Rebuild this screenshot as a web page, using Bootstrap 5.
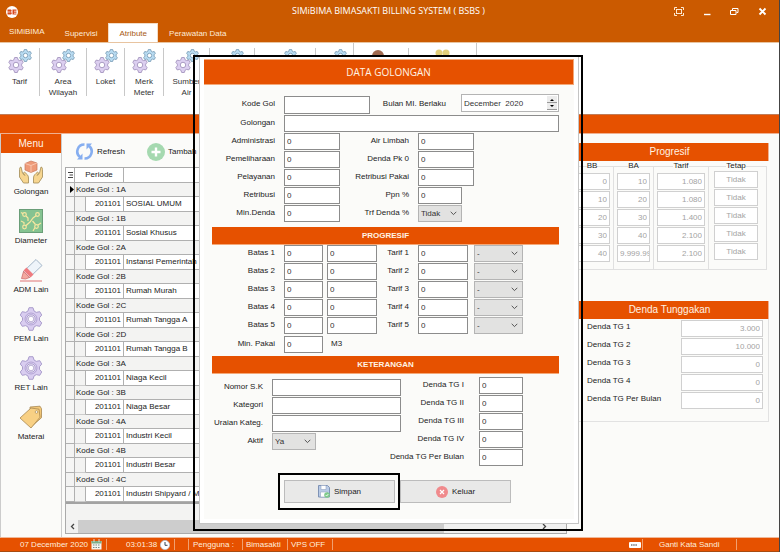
<!DOCTYPE html>
<html lang="id">
<head>
<meta charset="utf-8">
<meta name="viewport" content="width=device-width, initial-scale=1">
<title>SIMiBIMA BIMASAKTI BILLING SYSTEM ( BSBS )</title>
<link href="https://cdn.jsdelivr.net/npm/bootstrap@5.3.0/dist/css/bootstrap.min.css" rel="stylesheet">
<style>
:root{--brand:#e65100;--head:#cb5a00;--pane:#fbfbf9;--rule:#bdbdbd}
body{font:8px/10px "Liberation Sans",Arial,sans-serif;color:#222;background:var(--pane);overflow:hidden}
button{border:0;background:none;padding:0;color:inherit;line-height:10px}
svg{display:block;flex:none}
.app{min-height:100vh;border-right:1px solid #444}
.topbar{background:var(--head);color:#fff;border-bottom:1px solid #e8c4a0}
.titlebar{height:23px;font:9px/21px "Open Sans","Noto Sans",sans-serif}
.logo-slot{width:103px;padding-left:5px}
.win-tools{width:105px;padding-right:12px}
.tabs{height:19px}
.tabs a{color:#fdebd8;text-decoration:none;padding:6px 11px 3px;font-size:8px}
.tabs a.first-tab{padding:4px 9px 3px 9px}
.tabs a.open-tab{background:#fff;color:#a85a14;padding:5px 10px 4px;border:1px solid #f4dcc4;border-bottom:0}
.ribbon{background:#fff;height:71px}
.tool{border-right:1px solid #c8c8c8;height:48px;margin-top:5px;color:#333;line-height:11px}
.tool.tall{height:66px;margin-top:0;padding:5px 0 12px}
.tool svg{margin:1px auto 3px}
.w-a{width:40px}.w-b{width:47px}.w-c{width:38px}.w-d{width:39px}.w-e{width:46px}.w-f{width:45px}.w-g{width:61px}.w-h{width:38px}.w-i{width:55px}.w-j{width:68px}
.banner{background:var(--brand);height:20px;border-top:1px solid #c07c58;border-bottom:1px solid #f0b090}
.side{width:62px;border-left:1px solid #ccc;border-right:1px solid #ccc}
.side h2{background:var(--brand);color:#fff3e4;font-size:10px;line-height:19px;margin:0 0 7px}
.side button{width:100%;margin-bottom:12px}
.side svg{margin:0 auto 3px}
.center-pane{width:508px;padding:0 3px 3px}
.toolbar{height:33px;padding:2px 0 0 10px}
.toolbar button{gap:3px;margin-right:22px}
.grid-box{border:1px solid #aaa;background:#f3f3f2}
.grid-table{width:100%;margin:0;table-layout:fixed;border-collapse:separate;border-spacing:0}
.grid-table td,.grid-table th{padding:0 0 0 2px;border-bottom:1px solid #b0b0b0;border-right:1px solid #b0b0b0;font-weight:400;white-space:nowrap;height:15px;line-height:12px;overflow:hidden}
.grid-table tr.grp td{height:14px;background:#f3f3f2;padding-left:1px}
.grid-table td:first-child{background:#f6f6f5;padding:0}
.grid-table tr:not(.grp) td:nth-child(2){background:#f3f3f2;border-bottom-color:#ccc}
.grid-table tr:not(.grp) td:nth-child(n+3),.grid-table th{background:#fff}
.grid-table td.num{text-align:right;padding-right:2px}
.grid-foot{height:18px;border-top:2px solid #a2a2a2}
.scroll-track{height:13px;background:#f0f0f0}
.scroll-thumb{background:#cdcdcd;width:366px}
.scroll-track button{width:12px}
.right-pane{padding:9px 10px 0 1px;min-width:0}
.cap{background:var(--brand);color:#fff3e4;font-size:10px;line-height:18px;margin:0;text-align:center;border:0 solid #f0b090;border-right-width:1px}
.prog{margin:5px 2px 31px 0;height:104px}
.prog-col{border:1px solid #e0e0e0;border-left:0;padding:0 3px}
.prog-col span{display:block;width:fit-content;margin:-6px auto 3px;line-height:9px;background:var(--pane)}
.prog-col.tetap{padding:0 8px 0 5px}
.prog-col.tetap span{margin-bottom:1px}
input,select{font:8px/10px "Liberation Sans",Arial,sans-serif;height:17px;border:1px solid #8c8c8c;background:#fff;color:#333;padding:0 3px 0 2px;width:100%;min-width:0;border-radius:0;display:block}
input:focus,select:focus{outline:0}
.ro{border:1px solid #d0d0d0;color:#a3a3a3;text-align:right;padding-right:2px;margin-bottom:1px}
.ro.mid{text-align:center;padding:0}
.p1{width:43px}.p2{width:40px}.p3{width:55px}.p4{width:56px}
.tungg{border-bottom:1px solid #e2e2e2;border-right:1px solid #e2e2e2;padding:1px 5px 11px 16px}
.tungg .ro{width:82px}
.tungg label{line-height:14px}
.status{background:var(--brand);color:#ffeedd;height:15px;border-top:1px solid #f0b898;border-bottom:1px solid #a84a10}
.status span,.status a{border-right:1px solid #f0a070;height:11px;line-height:12px;color:inherit;text-decoration:none;white-space:nowrap}
.s-date{width:107px;padding-left:20px}.s-time{width:68px;padding-left:19px}.s-gap{width:14px}.s-user{width:54px;padding-left:4px}.s-name{width:45px;padding-left:3px}.s-vps{width:45px;padding-left:3px}
.s-key{width:14px}.s-pass{width:94px;padding-left:16px;margin-right:42px}
/* dialog and its highlight frames */
.frame{position:absolute;left:193px;top:55px;width:390px;border:2px solid #000;padding:0 2px 5px 4px}
.dlg{background:#fff;border:1px solid #c4c4c4;border-top:0;padding:2px 4px 4px}
.dlg-body{background:var(--pane);padding:11px 15px 9px 0}
.dlg h1{background:var(--brand);color:#fff3e4;font:10px/24px "Open Sans","Noto Sans",sans-serif;margin:0;text-align:center;border:1px solid #f4a878;border-width:1px 1px 1px 0}
.dlg h2{background:var(--brand);color:#fff3e4;font-size:8px;font-weight:700;line-height:17px;margin:5px 0 0 8px;text-align:center;border-bottom:1px solid #f4a878}
.dlg .g-min+h2{margin-top:3px}
.fgrid{display:grid;row-gap:1px;align-items:start;align-content:start}
.fgrid label{text-align:right;padding-right:9px;line-height:15px;white-space:nowrap}
.fgrid label.far{padding-right:15px}
.g-code{grid-template-columns:80px 86px 1fr 98px;margin-bottom:1px}
.g-code input{height:18px}
.g-name{grid-template-columns:80px 1fr;margin-bottom:1px}
.g-fee{grid-template-columns:80px 56px 1fr 56px;padding-right:85px}
.g-tier{grid-template-columns:80px 39px 4px 50px 1fr 50px 6px 49px;padding-right:36px}
.g-min{grid-template-columns:80px 39px 1fr;margin-top:2px}
.ket{padding-top:3px}
.g-sk{grid-template-columns:68px 129px;padding-top:2px}
.g-tg{grid-template-columns:minmax(0,1fr) 44px;justify-items:end;padding-right:36px}
.narrow{width:44px}
select{appearance:none;background:#e2e2e1 url("data:image/svg+xml,%3Csvg xmlns='http://www.w3.org/2000/svg' width='7' height='5'%3E%3Cpath d='M.7.8 3.5 3.6 6.3.8' fill='none' stroke='%23555'/%3E%3C/svg%3E") no-repeat right 4px center;border-color:#b4b4b4}
.spin{border:1px solid #b4b4b4;background:#fff;height:18px;margin-top:-2px}
.spin input{border:0;height:16px}
.spin-btns{width:14px;padding:1px}
.spin-btns button{background:#ececec;border-bottom:1px solid #999}
.spin-btns svg{margin:auto}
.actions{padding:7px 0 0 74px}
.save-ring{border:2px solid #000;padding:5px 3px 5px 4px}
.act{background:#e9e9e8;border:1px solid #bcbcbc;width:111px;height:23px;gap:4px}
</style>
</head>
<body>
<svg width="0" height="0" class="position-absolute" aria-hidden="true">
  <symbol id="gear" viewBox="-8.5 -8.5 17 17"><path d="M-2.2-5.6L-1.4-8H1.4L2.2-5.6 3.75-4.7 6.2-5.2 7.6-2.8 6-.9V.9L7.6 2.8 6.2 5.2 3.75 4.7 2.2 5.6 1.4 8H-1.4L-2.2 5.6-3.75 4.7-6.2 5.2-7.6 2.8-6 .9V-.9L-7.6-2.8-6.2-5.2-3.75-4.7Z" stroke-linejoin="round"/><circle r="2.9" fill="#fff"/></symbol>
  <symbol id="gears" viewBox="0 0 24 24"><use href="#gear" x="0" y="8" width="16" height="16" fill="#dccff0" stroke="#a698c0"/><use href="#gear" x="11" y="0" width="13" height="13" fill="#b9dcf2" stroke="#7c9fb8" stroke-width="1.2"/></symbol>
  <symbol id="biggear" viewBox="0 0 24 24"><use href="#gear" width="24" height="24" fill="#d9cdf0" stroke="#a99bcb" stroke-width=".7"/><circle cx="12" cy="12" r="6" fill="none" stroke="#a99bcb" stroke-width=".8"/><circle cx="12" cy="12" r="2.8" fill="#fff" stroke="#a99bcb" stroke-width=".8"/></symbol>
</svg>
<div class="app d-flex flex-column position-relative">
  <header class="topbar">
    <div class="titlebar d-flex">
      <div class="logo-slot d-flex align-items-center"><svg width="14" height="14" viewBox="0 0 14 14"><circle cx="7" cy="7" r="6" fill="#fff"/><path d="M2.500 4.500h3.500l.7 1-.6 1.400.8 1.300-.8 1.300H2.500zM7.500 4.500h4v1.200h-2.500v.8h2.500v1.200h-2.500v.8h2.500V9.500h-4z" fill="#d8481c"/><path d="M1 7h4.500" stroke="#fff" stroke-width=".7"/></svg></div>
      <div class="flex-fill text-center text-nowrap">SIMiBIMA BIMASAKTI BILLING SYSTEM ( BSBS )</div>
      <div class="win-tools d-flex align-items-center justify-content-between">
        <button aria-label="Layar penuh"><svg width="10" height="9" viewBox="0 0 10 9" fill="none" stroke="#fde8d0"><path d="M.5 3V.5H3M7 .5h2.500V3M9.500 6v2.500H7M3 8.500H.500V6"/><rect x="2.500" y="2.500" width="5" height="4"/></svg></button>
        <button aria-label="Perkecil"><svg width="8" height="9" viewBox="0 0 8 9"><path d="M1 7.500h6.500" stroke="#fff" stroke-width="1.400"/></svg></button>
        <button aria-label="Pulihkan"><svg width="9" height="9" viewBox="0 0 9 9" fill="none" stroke="#fff"><path d="M2.500 3V1.500H8V5.500H6.500"/><path d="M.5 3.500h5.500v4H.500z"/></svg></button>
        <button aria-label="Tutup"><svg width="9" height="9" viewBox="0 0 9 9"><path d="M1.500 1.500l6 6M7.500 1.500l-6 6" stroke="#fff" stroke-width="1.900"/></svg></button>
      </div>
    </div>
    <nav class="tabs d-flex"><a class="first-tab" href="#">SIMiBIMA</a><a href="#">Supervisi</a><a class="open-tab" href="#">Atribute</a><a href="#">Perawatan Data</a></nav>
  </header>
  <div class="ribbon d-flex align-items-start">
    <button class="tool w-a"><svg width="24" height="24"><use href="#gears"/></svg>Tarif<br>&nbsp;</button>
    <button class="tool w-b"><svg width="24" height="24"><use href="#gears"/></svg>Area<br>Wilayah</button>
    <button class="tool w-c"><svg width="24" height="24"><use href="#gears"/></svg>Loket<br>&nbsp;</button>
    <button class="tool w-d"><svg width="24" height="24"><use href="#gears"/></svg>Merk<br>Meter</button>
    <button class="tool w-e"><svg width="24" height="24"><use href="#gears"/></svg>Sumber<br>Air</button>
    <button class="tool w-f" aria-label="Atribut"><svg width="24" height="24"><use href="#gears"/></svg><br><br></button>
    <button class="tool w-g" aria-label="Atribut"><svg width="24" height="24"><use href="#gears"/></svg><br><br></button>
    <button class="tool tall w-h" aria-label="Atribut"><svg width="24" height="24"><use href="#gears"/></svg><br><br></button>
    <button class="tool w-i" aria-label="Pelanggan"><svg width="24" height="24"><circle cx="9" cy="7" r="6" fill="#a06a50"/></svg><br><br></button>
    <button class="tool tall w-j" aria-label="Grup"><svg width="24" height="24"><circle cx="8" cy="4" r="3.500" fill="#e2cf7a"/><circle cx="15" cy="4" r="3.500" fill="#e2cf7a"/></svg><br><br></button>
  </div>
  <div class="banner"></div>
  <main class="d-flex flex-fill">
    <nav class="side text-center flex-shrink-0">
      <h2>Menu</h2>
      <button><svg width="26" height="24" viewBox="0 0 26 24"><path d="M7 3.500l6-2.500 6 2v7l-6 2.500L7 10z" fill="#ee9a78" stroke="#c9775a" stroke-width=".7"/><path d="M7 3.500l6 2 6-2.500M13 5.500v7" fill="none" stroke="#fbd0bb" stroke-width=".8"/><path d="M3 7c-1.500 0-1.500 2-1.500 4v6l4 6h5v-5c0-3-2-4-3.500-5.500-1-1-2 .5-1.200 1.500l1 1.500-2.300-2.500z" fill="#f7d690" stroke="#a18a55" stroke-width=".8"/><path d="M23 7c1.500 0 1.500 2 1.500 4v6l-4 6h-5v-5c0-3 2-4 3.500-5.500 1-1 2 .5 1.200 1.500l-1 1.500 2.300-2.500z" fill="#f7d690" stroke="#a18a55" stroke-width=".8"/></svg>Golongan</button>
      <button><svg width="24" height="24" viewBox="0 0 24 24"><rect x=".5" y=".5" width="23" height="23" fill="#85c391" stroke="#6a9e78"/><g fill="none" stroke="#f8e7a0" stroke-width="1.200"><path d="M6.500 17L11 13l3-4 4-3M2 3.500l2.500 1.500M7 7l2 2v3M2 12l3 1.500v2M14 22l2-3.500M19 16l3-2M13.500 12l3 3.500"/></g><g fill="#85c391" stroke="#f8e7a0" stroke-width="1.200"><circle cx="5.500" cy="5.500" r="1.800"/><circle cx="18.500" cy="5.500" r="1.800"/><circle cx="5.500" cy="18" r="1.800"/><circle cx="17.500" cy="17.500" r="1.800"/></g></svg>Diameter</button>
      <button><svg width="24" height="24" viewBox="0 0 24 24"><path d="M4 14L17 1.500l6 6L10 20z" fill="#eef4fa" stroke="#8ea4bb" stroke-width=".8"/><path d="M4.500 13.500l6 6-4 1.500-4-.5z" fill="#f3a9a0" stroke="#c86464" stroke-width=".7"/><path d="M4.500 12.500l7 7 3-3-7-7z" fill="#ee7b7f"/><path d="M1 23h22" stroke="#e07474"/></svg>ADM Lain</button>
      <button><svg width="24" height="24"><use href="#biggear"/></svg>PEM Lain</button>
      <button><svg width="24" height="24"><use href="#biggear"/></svg>RET Lain</button>
      <button><svg width="26" height="24" viewBox="0 0 26 24"><path d="M12 2l10-.8 1.500 2.500v9L13 22z" fill="#f3c878" stroke="#a88850" stroke-width=".8"/><path d="M2 13L13 3l8 1.200 1 8L13 23z" fill="#f8d084" stroke="#a88850" stroke-width=".8"/><circle cx="18.500" cy="7" r="1.300" fill="#fff" stroke="#a88850" stroke-width=".7"/></svg>Materai</button>
    </nav>
    <section class="center-pane d-flex flex-column flex-shrink-0">
      <div class="toolbar d-flex align-items-center">
        <button class="d-flex align-items-center"><svg width="19" height="19" viewBox="0 0 19 19"><path d="M9.500 2.500A7 7 0 0 0 5 15" fill="none" stroke="#86aef0" stroke-width="2.600"/><path d="M9.500 16.500A7 7 0 0 0 14 4" fill="none" stroke="#86aef0" stroke-width="2.600"/><path d="M7.500 11.500v6H2zM11.500 7.500v-6H17z" fill="#86aef0"/></svg>Refresh</button>
        <button class="d-flex align-items-center"><svg width="18" height="18" viewBox="0 0 18 18"><circle cx="9" cy="9" r="9" fill="#a5d9b0"/><path d="M9 4.500v9M4.500 9h9" stroke="#fff" stroke-width="2.400"/></svg>Tambah</button>
      </div>
      <div class="grid-box flex-fill d-flex flex-column">
        <table class="grid-table">
          <colgroup><col style="width:9px"><col style="width:11px"><col style="width:38px"><col></colgroup>
          <thead><tr><th><svg width="5" height="8" viewBox="0 0 5 8"><path d="M0 1.500h5M1.500 4h3.500M0 6.500h5" stroke="#444"/></svg></th><th colspan="2" class="ps-2">&nbsp;Periode</th><th></th></tr></thead>
          <tbody>
          <tr class="grp"><td><svg width="8" height="9" viewBox="0 0 8 9"><path d="M3 1l4 3.500L3 8z"/></svg></td><td colspan="3">Kode Gol : 1A</td></tr>
          <tr><td></td><td></td><td class="num">201101</td><td>SOSIAL UMUM</td></tr>
          <tr class="grp"><td></td><td colspan="3">Kode Gol : 1B</td></tr>
          <tr><td></td><td></td><td class="num">201101</td><td>Sosial Khusus</td></tr>
          <tr class="grp"><td></td><td colspan="3">Kode Gol : 2A</td></tr>
          <tr><td></td><td></td><td class="num">201101</td><td>Instansi Pemerintah</td></tr>
          <tr class="grp"><td></td><td colspan="3">Kode Gol : 2B</td></tr>
          <tr><td></td><td></td><td class="num">201101</td><td>Rumah Murah</td></tr>
          <tr class="grp"><td></td><td colspan="3">Kode Gol : 2C</td></tr>
          <tr><td></td><td></td><td class="num">201101</td><td>Rumah Tangga A</td></tr>
          <tr class="grp"><td></td><td colspan="3">Kode Gol : 2D</td></tr>
          <tr><td></td><td></td><td class="num">201101</td><td>Rumah Tangga B</td></tr>
          <tr class="grp"><td></td><td colspan="3">Kode Gol : 3A</td></tr>
          <tr><td></td><td></td><td class="num">201101</td><td>Niaga Kecil</td></tr>
          <tr class="grp"><td></td><td colspan="3">Kode Gol : 3B</td></tr>
          <tr><td></td><td></td><td class="num">201101</td><td>Niaga Besar</td></tr>
          <tr class="grp"><td></td><td colspan="3">Kode Gol : 4A</td></tr>
          <tr><td></td><td></td><td class="num">201101</td><td>Industri Kecil</td></tr>
          <tr class="grp"><td></td><td colspan="3">Kode Gol : 4B</td></tr>
          <tr><td></td><td></td><td class="num">201101</td><td>Industri Besar</td></tr>
          <tr class="grp"><td></td><td colspan="3">Kode Gol : 4C</td></tr>
          <tr><td></td><td></td><td class="num">201101</td><td>Industri Shipyard / M</td></tr>
          </tbody>
        </table>
        <div class="grid-foot flex-fill"></div>
        <div class="scroll-track d-flex">
          <button aria-label="Gulir kiri"><svg class="m-auto" width="5" height="7" viewBox="0 0 5 7"><path d="M4 1L1.500 3.500 4 6" fill="none" stroke="#444" stroke-width="1.300"/></svg></button>
          <div class="scroll-thumb"></div>
          <button class="ms-auto me-3" aria-label="Gulir kanan"><svg class="m-auto" width="5" height="7" viewBox="0 0 5 7"><path d="M1 1l2.500 2.500L1 6" fill="none" stroke="#444" stroke-width="1.300"/></svg></button>
        </div>
      </div>
    </section>
    <section class="right-pane flex-fill">
      <h2 class="cap">Progresif</h2>
      <div class="prog d-flex">
        <div class="prog-col p1"><span>BB</span>
          <input class="ro" aria-label="BB 1" value="0" disabled><input class="ro" aria-label="BB 2" value="10" disabled><input class="ro" aria-label="BB 3" value="20" disabled><input class="ro" aria-label="BB 4" value="30" disabled><input class="ro" aria-label="BB 5" value="40" disabled></div>
        <div class="prog-col p2"><span>BA</span>
          <input class="ro" aria-label="BA 1" value="10" disabled><input class="ro" aria-label="BA 2" value="20" disabled><input class="ro" aria-label="BA 3" value="30" disabled><input class="ro" aria-label="BA 4" value="40" disabled><input class="ro text-start pe-0" aria-label="BA 5" value="9.999.999" disabled></div>
        <div class="prog-col p3"><span>Tarif</span>
          <input class="ro" aria-label="Tarif golongan 1" value="1.080" disabled><input class="ro" aria-label="Tarif golongan 2" value="1.080" disabled><input class="ro" aria-label="Tarif golongan 3" value="1.400" disabled><input class="ro" aria-label="Tarif golongan 4" value="2.100" disabled><input class="ro" aria-label="Tarif golongan 5" value="2.100" disabled></div>
        <div class="prog-col p4 tetap flex-fill"><span>Tetap</span>
          <input class="ro mid" aria-label="Tetap 1" value="Tidak" disabled><input class="ro mid" aria-label="Tetap 2" value="Tidak" disabled><input class="ro mid" aria-label="Tetap 3" value="Tidak" disabled><input class="ro mid" aria-label="Tetap 4" value="Tidak" disabled><input class="ro mid" aria-label="Tetap 5" value="Tidak" disabled></div>
      </div>
      <h2 class="cap">Denda Tunggakan</h2>
      <div class="tungg">
        <div class="d-flex justify-content-between"><label for="t1">Denda TG 1</label><input id="t1" class="ro" value="3.000" disabled></div>
        <div class="d-flex justify-content-between"><label for="t2">Denda TG 2</label><input id="t2" class="ro" value="10.000" disabled></div>
        <div class="d-flex justify-content-between"><label for="t3">Denda TG 3</label><input id="t3" class="ro" value="0" disabled></div>
        <div class="d-flex justify-content-between"><label for="t4">Denda TG 4</label><input id="t4" class="ro" value="0" disabled></div>
        <div class="d-flex justify-content-between"><label for="t5">Denda TG Per Bulan</label><input id="t5" class="ro" value="0" disabled></div>
      </div>
    </section>
  </main>
  <footer class="status d-flex align-items-center">
    <span class="s-date d-flex align-items-center justify-content-between pe-1">07 December 2020<svg width="11" height="11" viewBox="0 0 11 11"><rect x=".5" y="2" width="10" height="8.500" fill="#f4f4f0"/><path d="M.5 2h10v2.500H.500z" fill="#7cae88"/><path d="M3 0v3M8 0v3" stroke="#ddd"/><path d="M2 6h7M2 8.500h7" stroke="#7a8a88" stroke-dasharray="1.500 1"/></svg></span>
    <span class="s-time d-flex align-items-center justify-content-between pe-1">03:01:38<svg width="10" height="10" viewBox="0 0 10 10"><circle cx="5" cy="5" r="4.600" fill="#fff" stroke="#b5c6d8" stroke-width=".8"/><path d="M5 2v3.300h2.500" fill="none" stroke="#345"/></svg></span>
    <span class="s-gap"></span><span class="s-user">Pengguna :</span><span class="s-name">Bimasakti</span><span class="s-vps">VPS OFF</span>
    <span class="s-key ms-auto d-flex align-items-center"><svg width="12" height="6" viewBox="0 0 12 6"><rect width="12" height="6" rx="1" fill="#fff"/><path d="M2 3h6" stroke="#777" stroke-width="1.500" stroke-dasharray="1.500 .7"/></svg></span>
    <a class="s-pass" href="#">Ganti Kata Sandi</a>
  </footer>

  <div class="frame">
    <form class="dlg" role="dialog" aria-labelledby="dlgTitle">
      <h1 id="dlgTitle">DATA GOLONGAN</h1>
      <div class="dlg-body">
        <div class="fgrid g-code">
          <label for="kode">Kode Gol</label><input id="kode" autofocus>
          <label class="far" for="bulan">Bulan MI. Berlaku</label>
          <div class="spin d-flex"><input id="bulan" value="December  2020"><div class="spin-btns d-flex flex-column"><button type="button" class="flex-fill d-flex" aria-label="Naik"><svg width="4" height="3"><path d="M0 3l2-2 2 2z"/></svg></button><button type="button" class="flex-fill d-flex" aria-label="Turun"><svg width="4" height="3"><path d="M0 0l2 2 2-2z"/></svg></button></div></div>
        </div>
        <div class="fgrid g-name"><label for="gol">Golongan</label><input id="gol"></div>
        <div class="fgrid g-fee">
          <label for="adm">Administrasi</label><input id="adm" value="0"><label for="air">Air Limbah</label><input id="air" value="0">
          <label for="pem">Pemeliharaan</label><input id="pem" value="0"><label for="dpk">Denda Pk 0</label><input id="dpk" value="0">
          <label for="pel">Pelayanan</label><input id="pel" value="0"><label for="rpk">Retribusi Pakai</label><input id="rpk" value="0">
          <label for="ret">Retribusi</label><input id="ret" value="0"><label for="ppn">Ppn %</label><input id="ppn" class="narrow" value="0">
          <label for="min">Min.Denda</label><input id="min" value="0"><label for="trf">Trf Denda %</label><select id="trf" class="narrow"><option>Tidak</option><option>Ya</option></select>
        </div>
        <h2>PROGRESIF</h2>
        <div class="fgrid g-tier">
          <label for="b1">Batas 1</label><input id="b1" value="0"><i></i><input aria-label="Batas 1 atas" value="0"><label for="f1">Tarif 1</label><input id="f1" value="0"><i></i><select aria-label="Tetap tarif 1"><option>-</option></select>
          <label for="b2">Batas 2</label><input id="b2" value="0"><i></i><input aria-label="Batas 2 atas" value="0"><label for="f2">Tarif 2</label><input id="f2" value="0"><i></i><select aria-label="Tetap tarif 2"><option>-</option></select>
          <label for="b3">Batas 3</label><input id="b3" value="0"><i></i><input aria-label="Batas 3 atas" value="0"><label for="f3">Tarif 3</label><input id="f3" value="0"><i></i><select aria-label="Tetap tarif 3"><option>-</option></select>
          <label for="b4">Batas 4</label><input id="b4" value="0"><i></i><input aria-label="Batas 4 atas" value="0"><label for="f4">Tarif 4</label><input id="f4" value="0"><i></i><select aria-label="Tetap tarif 4"><option>-</option></select>
          <label for="b5">Batas 5</label><input id="b5" value="0"><i></i><input aria-label="Batas 5 atas" value="0"><label for="f5">Tarif 5</label><input id="f5" value="0"><i></i><select aria-label="Tetap tarif 5"><option>-</option></select>
        </div>
        <div class="fgrid g-min"><label for="mp">Min. Pakai</label><input id="mp" value="0"><label for="mp" class="text-start ps-2">M3</label></div>
        <h2>KETERANGAN</h2>
        <div class="ket d-flex">
          <div class="fgrid g-sk">
            <label for="sk">Nomor S.K</label><input id="sk">
            <label for="kat">Kategori</label><input id="kat">
            <label for="ur">Uraian Kateg.</label><input id="ur">
            <label for="akt">Aktif</label><select id="akt" class="narrow"><option>Ya</option><option>Tidak</option></select>
          </div>
          <div class="fgrid g-tg flex-fill">
            <label class="far" for="d1">Denda TG I</label><input id="d1" value="0">
            <label class="far" for="d2">Denda TG II</label><input id="d2" value="0">
            <label class="far" for="d3">Denda TG III</label><input id="d3" value="0">
            <label class="far" for="d4">Denda TG IV</label><input id="d4" value="0">
            <label class="far" for="d5">Denda TG Per Bulan</label><input id="d5" value="0">
          </div>
        </div>
        <div class="actions d-flex align-items-center">
          <div class="save-ring"><button type="button" class="act d-flex align-items-center justify-content-center"><svg width="12" height="13" viewBox="0 0 12 13"><path d="M.5.500h9l2 2v9.500H.500z" fill="#b9cbe6" stroke="#7f93b5"/><path d="M3 .5h5v4H3zM2.500 7h7v5h-7z" fill="#fff" stroke="#93a5c2" stroke-width=".6"/><circle cx="9" cy="10" r="2.800" fill="#7fca8c"/><path d="M7.700 10l1 1 1.600-2" fill="none" stroke="#fff" stroke-width=".8"/></svg>Simpan</button></div>
          <button type="button" class="act d-flex align-items-center justify-content-center"><svg width="12" height="12" viewBox="0 0 12 12"><circle cx="6" cy="6" r="6" fill="#f08a8c"/><path d="M4 4l4 4M8 4L4 8" stroke="#fff" stroke-width="1.200"/></svg>Keluar</button>
        </div>
      </div>
    </form>
  </div>
</div>
<script src="https://cdn.jsdelivr.net/npm/bootstrap@5.3.0/dist/js/bootstrap.bundle.min.js"></script>
</body>
</html>
